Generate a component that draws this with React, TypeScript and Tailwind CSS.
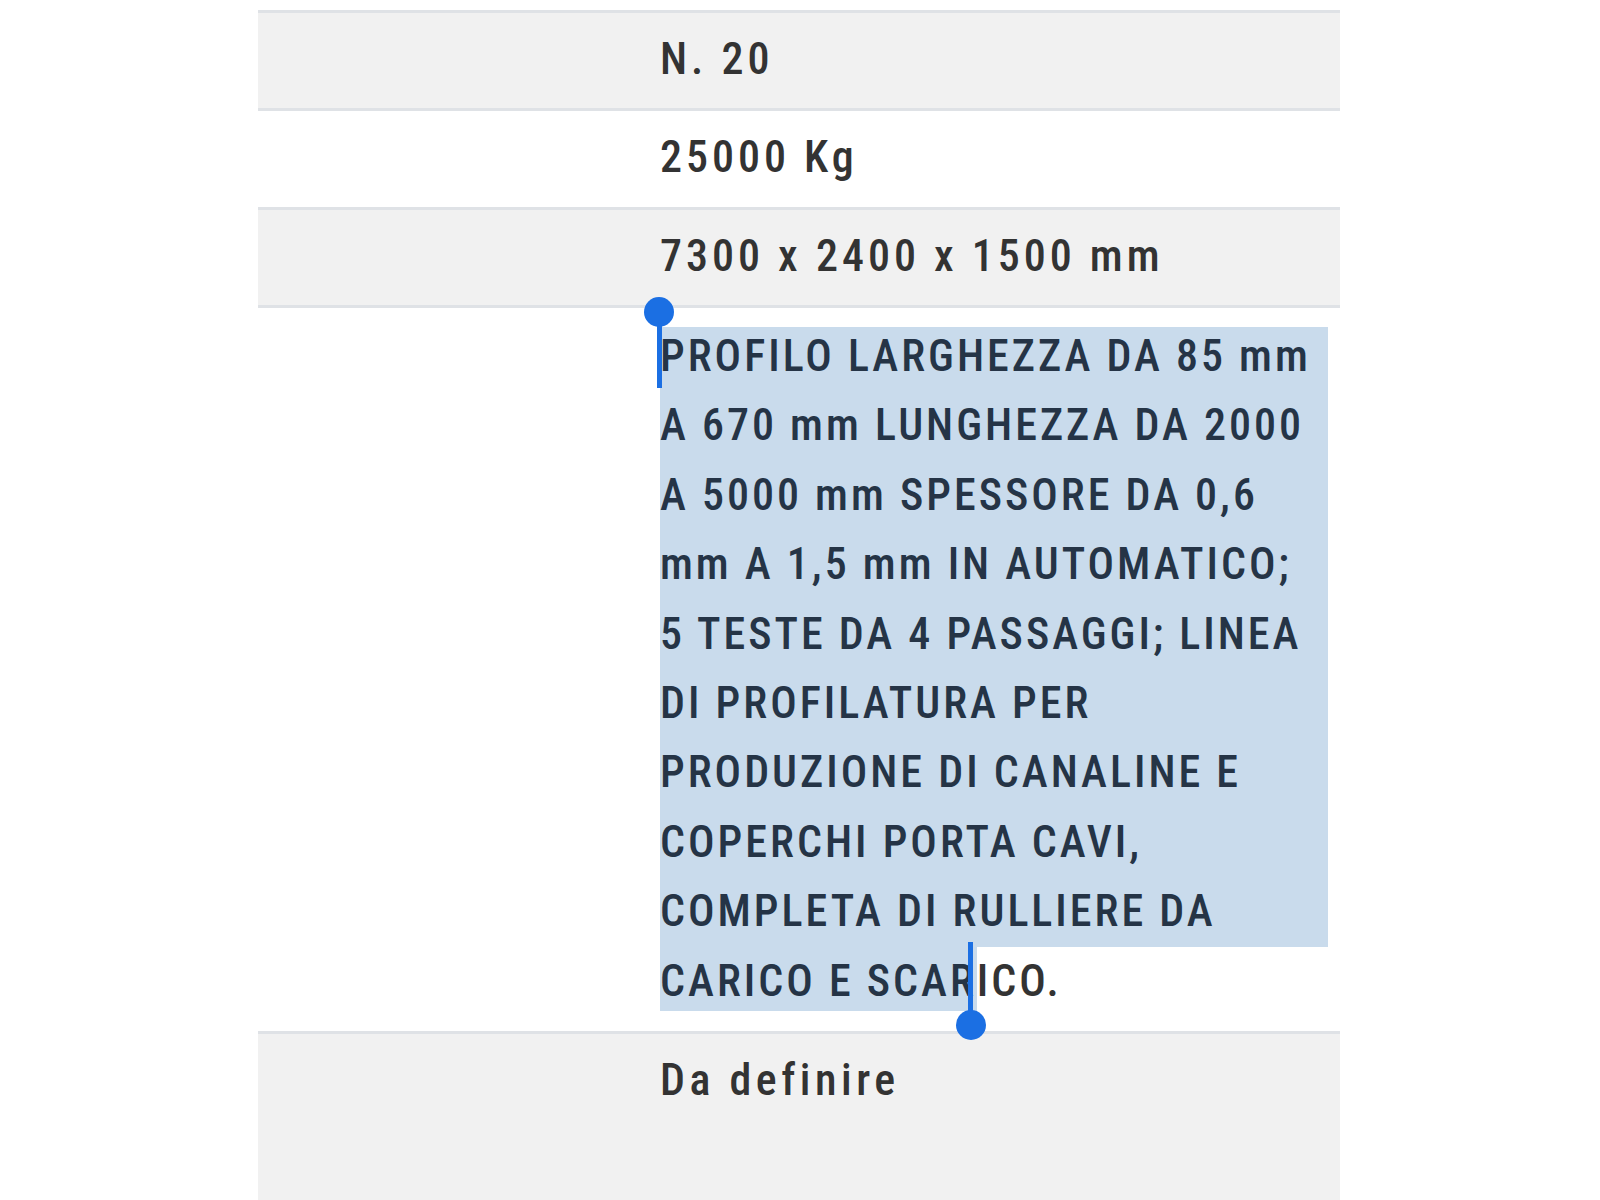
const FONT = { fontFamily: '"Roboto", "Noto Sans", sans-serif', fontStretch: "condensed" } as const;

const lines = [
  "PROFILO LARGHEZZA DA 85 mm",
  "A 670 mm LUNGHEZZA DA 2000",
  "A 5000 mm SPESSORE DA 0,6",
  "mm A 1,5 mm IN AUTOMATICO;",
  "5 TESTE DA 4 PASSAGGI; LINEA",
  "DI PROFILATURA PER",
  "PRODUZIONE DI CANALINE E",
  "COPERCHI PORTA CAVI,",
  "COMPLETA DI RULLIERE DA",
];

function Row({ bg, children, pad }: { bg: string; children: React.ReactNode; pad: string }) {
  return (
    <div className={`flex border-t-[3px] border-[#dfe2e6] ${bg} ${pad}`}>
      <div className="w-[402px] shrink-0" />
      <div className="w-[668px] shrink-0">{children}</div>
    </div>
  );
}

export default function App() {
  return (
    <div className="min-h-[1200px] bg-white pt-[10px]" style={FONT}>
      <div className="ml-[258px] w-[1082px] text-[44px] font-medium text-[#333333]">
        <Row bg="bg-[#f1f1f1]" pad="pt-[12px] pb-[14px]">
          <div className="h-[69px] leading-[69px] tracking-[4px]">N. 20</div>
        </Row>
        <Row bg="bg-white" pad="pt-[12px] pb-[15px]">
          <div className="h-[69px] leading-[69px] tracking-[4px]">25000 Kg</div>
        </Row>
        <Row bg="bg-[#f1f1f1]" pad="pt-[12px] pb-[14px]">
          <div className="h-[69px] leading-[69px] tracking-[4px]">7300 x 2400 x 1500 mm</div>
        </Row>
        <Row bg="bg-white" pad="pt-[14px] pb-[15px]">
          <div className="relative tracking-[3px]">
            {lines.map((l, i) => (
              <div
                key={i}
                className={`h-[69.4px] whitespace-nowrap leading-[69.4px] text-[#253446] ${i === 0 ? "bg-[linear-gradient(to_bottom,transparent_5px,#c9dbec_5px)]" : "bg-[#c9dbec]"}`}
              >
                {l}
              </div>
            ))}
            <div className="h-[69.4px] whitespace-nowrap leading-[69.4px]">
              <span className="inline-block h-[64px] bg-[#c9dbec] align-top leading-[69.4px] text-[#253446]">CARICO E SCAR</span>
              <span>ICO.</span>
            </div>
            <div className="absolute left-[-3px] top-[-10px] h-[76px] w-[5px] bg-[#1b6fe3]" />
            <div className="absolute left-[-16px] top-[-25px] h-[30px] w-[30px] rounded-full bg-[#1b6fe3]" />
            <div className="absolute left-[308px] top-[620px] h-[82px] w-[5px] bg-[#1b6fe3]" />
            <div className="absolute left-[296px] top-[688px] h-[30px] w-[30px] rounded-full bg-[#1b6fe3]" />
          </div>
        </Row>
        <Row bg="bg-[#f1f1f1]" pad="pt-[12px] pb-[14px] min-h-[172px]">
          <div className="h-[69px] leading-[69px] tracking-[4.5px]">Da definire</div>
        </Row>
      </div>
    </div>
  );
}
